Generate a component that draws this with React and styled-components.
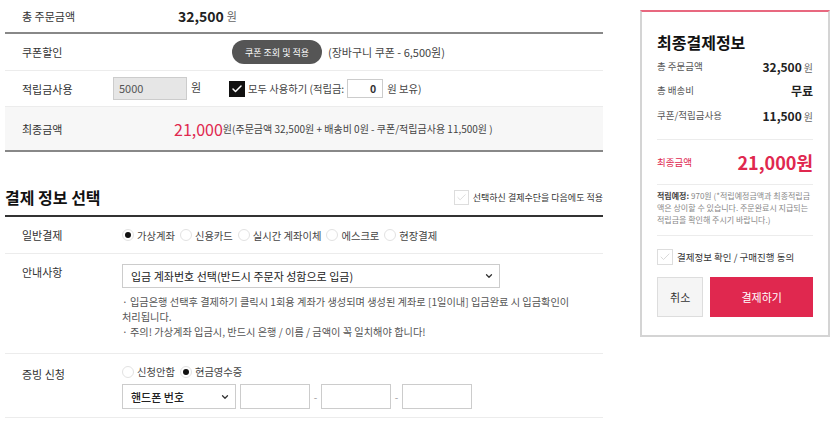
import React from 'react';
import styled, { createGlobalStyle } from 'styled-components';
import { ChevronDown, Check } from 'lucide-react';

const GlobalStyle = createGlobalStyle`
  body {
    margin: 0;
    background: #fff;
    font-family: "Noto Sans CJK KR", "Noto Sans", sans-serif;
    color: #333;
  }
`;

const RED = '#e0284f';

const Page = styled.div`
  display: flex;
  align-items: flex-start;
  padding-left: 5px;
`;

const Main = styled.div`
  width: 598px;
`;

const Row = styled.div`
  display: flex;
  align-items: ${(p) => (p.$top ? 'flex-start' : 'center')};
  height: ${(p) => (p.$h ? `${p.$h}px` : 'auto')};
  padding: ${(p) => p.$pad || '0'} 0 ${(p) => p.$padB || '0'} 17px;
  background: ${(p) => (p.$shade ? '#f7f7f7' : 'transparent')};
  border-top: ${(p) => p.$topLine || 'none'};
  border-bottom: ${(p) => p.$line || '1px solid #ececec'};
  box-sizing: border-box;
  font-size: 11px;
`;

const Label = styled.div`
  flex: none;
  width: ${(p) => p.$w}px;
  font-size: 11px;
  color: #333;
  line-height: 16px;
`;

const Amount = styled.span`
  font-size: 14px;
  font-weight: 700;
  color: #222;
`;

const Won = styled.span`
  font-size: 11px;
  color: #666;
  margin-left: 3px;
`;

const PillButton = styled.button`
  height: 24px;
  width: 90px;
  border: none;
  border-radius: 12px;
  background: #555;
  color: #fff;
  font-family: inherit;
  font-size: 9px;
  padding: 0;
  margin-right: 6px;
`;

const Muted = styled.span`
  color: #444;
  font-size: ${(p) => p.$size || 11}px;
`;

const PointInput = styled.div`
  width: 74px;
  height: 23px;
  box-sizing: border-box;
  border: 1px solid #ccc;
  background: #e6e6e6;
  color: #555;
  font-size: 11px;
  line-height: 21px;
  padding-left: 5px;
`;

const UnitText = styled.span`
  font-size: 11px;
  color: #444;
  margin: -4px 0 0 4px;
  width: 38px;
`;

const BlackCheck = styled.span`
  display: inline-flex;
  align-items: center;
  justify-content: center;
  width: 16px;
  height: 16px;
  background: #111;
  color: #fff;
  margin-right: 3px;
`;

const SmallBox = styled.span`
  display: inline-block;
  width: 36px;
  height: 19px;
  box-sizing: border-box;
  border: 1px solid #ccc;
  background: #fff;
  text-align: right;
  padding-right: 6px;
  font-weight: 700;
  font-size: 10.5px;
  line-height: 17px;
  margin: 0 4px 0 3px;
`;

const BigRed = styled.span`
  font-size: 16px;
  color: ${RED};
`;

const Tiny = styled.span`
  font-size: 10px;
  color: #444;
`;

const TitleBar = styled.div`
  display: flex;
  align-items: center;
  justify-content: space-between;
  padding: 34px 0 7px 0;
  border-top: 2px solid #888;
  border-bottom: 2px solid #333;
`;

const Title = styled.h2`
  margin: 0;
  font-size: 16px;
  font-weight: 700;
  color: #111;
  line-height: 22px;
`;

const CheckLine = styled.label`
  display: flex;
  align-items: center;
  gap: 4px;
  font-size: ${(p) => p.$size || 9}px;
  color: #333;
`;

const LightBox = styled.span`
  display: inline-flex;
  align-items: center;
  justify-content: center;
  width: ${(p) => p.$s || 14}px;
  height: ${(p) => p.$s || 14}px;
  border: 1px solid #ddd;
  box-sizing: border-box;
  color: #ccc;
  background: #fff;
`;

const RadioGroup = styled.div`
  display: flex;
  align-items: center;
  gap: 5px;
`;

const RadioItem = styled.label`
  display: flex;
  align-items: center;
  gap: 3px;
  font-size: 10.3px;
  color: #444;
`;

const RadioDot = styled.span`
  width: 12px;
  height: 12px;
  border-radius: 50%;
  border: 1px solid #e2e2e2;
  box-sizing: border-box;
  display: inline-flex;
  align-items: center;
  justify-content: center;
  &::after {
    content: '';
    width: 6px;
    height: 6px;
    border-radius: 50%;
    background: ${(p) => (p.$on ? '#111' : 'transparent')};
  }
`;

const Stack = styled.div`
  display: flex;
  flex-direction: column;
`;

const Select = styled.div`
  display: flex;
  align-items: center;
  justify-content: space-between;
  width: ${(p) => p.$w}px;
  height: ${(p) => p.$h || 24}px;
  box-sizing: border-box;
  border: 1px solid #ccc;
  background: #fff;
  padding: 0 5px 0 8px;
  font-size: 11px;
  font-weight: ${(p) => (p.$bold ? 500 : 400)};
  color: #222;
`;

const Notes = styled.div`
  margin-top: 6px;
  width: 460px;
  font-size: 10.2px;
  line-height: 15px;
  color: #555;
  word-break: keep-all;
`;

const PhoneRow = styled.div`
  display: flex;
  align-items: center;
  margin-top: 5px;
`;

const PhoneInput = styled.div`
  width: 70px;
  height: 25px;
  box-sizing: border-box;
  border: 1px solid #ccc;
  margin-left: ${(p) => (p.$first ? 4 : 0)}px;
`;

const Dash = styled.span`
  width: 11px;
  text-align: center;
  font-size: 10px;
  color: #999;
`;

const Panel = styled.aside`
  margin: 10px 0 0 37px;
  width: 190px;
  box-sizing: border-box;
  border: 2px solid #d4d4d4;
  border-top: 2px solid #e8687f;
  padding: 19px 15px 18px 15px;
  background: #fff;
`;

const PanelTitle = styled.h3`
  margin: 0 0 1px 0;
  font-size: 16px;
  font-weight: 700;
  color: #111;
  line-height: 22px;
`;

const PanelRow = styled.div`
  display: flex;
  justify-content: space-between;
  align-items: center;
  height: ${(p) => p.$h || 24}px;
`;

const PanelLabel = styled.span`
  font-size: 9.5px;
  color: ${(p) => (p.$red ? RED : '#555')};
`;

const PanelValue = styled.span`
  font-size: ${(p) => p.$size || 12}px;
  font-weight: 700;
  color: ${(p) => p.$color || '#222'};
`;

const PanelWon = styled.span`
  font-size: 10px;
  font-weight: 400;
  color: #666;
  margin-left: 2px;
`;

const Divider = styled.div`
  height: 1px;
  background: #ececec;
  margin: ${(p) => p.$m || '0'};
`;

const Fine = styled.p`
  margin: 5px 0 9px 0;
  font-size: 8px;
  line-height: 12px;
  color: #888;
  word-break: break-all;
`;

const FineStrong = styled.strong`
  color: #444;
  font-weight: 700;
  margin-right: 2px;
`;

const Buttons = styled.div`
  display: flex;
  gap: 7px;
  margin-top: 12px;
`;

const ActionButton = styled.button`
  height: 40px;
  width: ${(p) => p.$w}px;
  border: 1px solid ${(p) => (p.$primary ? RED : '#ddd')};
  background: ${(p) => (p.$primary ? RED : '#f5f5f5')};
  color: ${(p) => (p.$primary ? '#fff' : '#333')};
  font-family: inherit;
  font-size: 11px;
  padding: 0;
`;

const payMethods = ['가상계좌', '신용카드', '실시간 계좌이체', '에스크로', '현장결제'];

const App = () => {
  return (
    <>
      <GlobalStyle />
      <Page>
        <Main>
          <Row $h={32} $line="none">
            <Label $w={156}>총 주문금액</Label>
            <Amount>32,500</Amount>
            <Won>원</Won>
          </Row>
          <Row $h={39} $topLine="2px solid #888">
            <Label $w={210}>쿠폰할인</Label>
            <PillButton>쿠폰 조회 및 적용</PillButton>
            <Muted>(장바구니 쿠폰 - 6,500원)</Muted>
          </Row>
          <Row $h={36}>
            <Label $w={91}>적립금사용</Label>
            <PointInput>5000</PointInput>
            <UnitText>원</UnitText>
            <BlackCheck>
              <Check size={12} strokeWidth={3} />
            </BlackCheck>
            <Muted $size={10.3}>모두 사용하기 (적립금:</Muted>
            <SmallBox>0</SmallBox>
            <Muted $size={10.3}>원 보유)</Muted>
          </Row>
          <Row $h={43} $shade $line="none">
            <Label $w={152}>최종금액</Label>
            <BigRed>21,000</BigRed>
            <Tiny>원(주문금액 32,500원 + 배송비 0원 - 쿠폰/적립금사용 11,500원 )</Tiny>
          </Row>

          <TitleBar>
            <Title>결제 정보 선택</Title>
            <CheckLine>
              <LightBox $s={15}>
                <Check size={11} strokeWidth={1.5} />
              </LightBox>
              선택하신 결제수단을 다음에도 적용
            </CheckLine>
          </TitleBar>

          <Row $h={37}>
            <Label $w={100}>일반결제</Label>
            <RadioGroup>
              {payMethods.map((m, i) => (
                <RadioItem key={m}>
                  <RadioDot $on={i === 0} />
                  {m}
                </RadioItem>
              ))}
            </RadioGroup>
          </Row>

          <Row $top $pad="10px" $padB="14px">
            <Label $w={100}>안내사항</Label>
            <Stack>
              <Select $w={378}>
                입금 계좌번호 선택(반드시 주문자 성함으로 입금)
                <ChevronDown size={10} strokeWidth={3} color="#333" />
              </Select>
              <Notes>
                · 입금은행 선택후 결제하기 클릭시 1회용 계좌가 생성되며 생성된 계좌로 [1일이내] 입금완료 시 입금확인이 처리됩니다.
                <br />· 주의! 가상계좌 입금시, 반드시 은행 / 이름 / 금액이 꼭 일치해야 합니다!
              </Notes>
            </Stack>
          </Row>

          <Row $top $pad="10px" $padB="8px">
            <Label $w={100} style={{ marginTop: 2 }}>증빙 신청</Label>
            <Stack>
              <RadioGroup>
                <RadioItem>
                  <RadioDot />
                  신청안함
                </RadioItem>
                <RadioItem>
                  <RadioDot $on />
                  현금영수증
                </RadioItem>
              </RadioGroup>
              <PhoneRow>
                <Select $w={114} $h={25} $bold>
                  핸드폰 번호
                  <ChevronDown size={10} strokeWidth={3} color="#333" />
                </Select>
                <PhoneInput $first />
                <Dash>-</Dash>
                <PhoneInput />
                <Dash>-</Dash>
                <PhoneInput />
              </PhoneRow>
            </Stack>
          </Row>
        </Main>

        <Panel>
          <PanelTitle>최종결제정보</PanelTitle>
          <PanelRow>
            <PanelLabel>총 주문금액</PanelLabel>
            <PanelValue>
              32,500<PanelWon>원</PanelWon>
            </PanelValue>
          </PanelRow>
          <PanelRow>
            <PanelLabel>총 배송비</PanelLabel>
            <PanelValue>무료</PanelValue>
          </PanelRow>
          <PanelRow $h={26}>
            <PanelLabel>쿠폰/적립금사용</PanelLabel>
            <PanelValue>
              11,500<PanelWon>원</PanelWon>
            </PanelValue>
          </PanelRow>
          <Divider $m="11px 0 0 0" />
          <PanelRow $h={44}>
            <PanelLabel $red>최종금액</PanelLabel>
            <PanelValue $size={18} $color={RED}>
              21,000원
            </PanelValue>
          </PanelRow>
          <Divider />
          <Fine>
            <FineStrong>적립예정:</FineStrong>970원 (*적립예정금액과 최종적립금액은 상이할 수 있습니다. 주문완료시 지급되는 적립금을 확인해 주시기 바랍니다.)
          </Fine>
          <Divider />
          <CheckLine $size={9.5} style={{ marginTop: 13 }}>
            <LightBox $s={16}>
              <Check size={12} strokeWidth={1.5} />
            </LightBox>
            결제정보 확인 / 구매진행 동의
          </CheckLine>
          <Buttons>
            <ActionButton $w={47}>취소</ActionButton>
            <ActionButton $w={104} $primary>결제하기</ActionButton>
          </Buttons>
        </Panel>
      </Page>
    </>
  );
};

export default App;
